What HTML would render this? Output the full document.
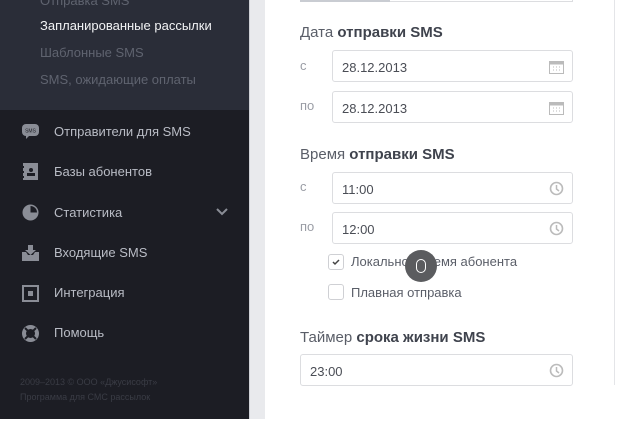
<!DOCTYPE html>
<html><head><meta charset="utf-8"><style>
*{margin:0;padding:0;box-sizing:border-box}
body{width:640px;height:430px;background:#fff;position:relative;overflow:hidden;font-family:"Liberation Sans","DejaVu Sans",sans-serif}
.sb{position:absolute;left:0;top:0;width:249px;height:419px;background:#1c1d24}
.sub{position:absolute;left:0;top:0;width:249px;height:110px;background:#2a2d38}
.sub div{position:absolute;left:40px;font-size:13px;color:#5f636f}
.nav{position:absolute;left:54px;font-size:13px;color:#b9bcc5}
.ic{position:absolute;left:22px;width:17px;height:17px}
.foot{position:absolute;left:20px;font-size:9px;color:#3a3c45}
.strip{position:absolute;left:249px;top:0;width:16px;height:419px;background:#e9eaed;border-left:1px solid #cfd1d6}
.rl{position:absolute;left:614px;top:0;width:1px;height:385px;background:#e4e5e8}
.h{position:absolute;left:300px;font-size:15px;color:#5a5e68}
.h b{color:#3f434d}
.lb{position:absolute;left:300px;font-size:13px;color:#9a9da5}
.in{position:absolute;left:332px;width:241px;height:32px;border:1px solid #dcdde0;border-radius:3px;font-size:13px;color:#4a4d55;padding:9px 0 0 9px}
.cb{position:absolute;left:328px;width:16px;height:16px;border:1px solid #cfd0d4;border-radius:3px;background:#fff}
.ct{position:absolute;left:351px;font-size:13px;color:#5a5e68}
svg.r{position:absolute;right:8px;top:8px}
</style></head><body>
<div class="sb">
<div class="sub">
<div style="top:-7px">Отправка SMS</div>
<div style="top:18px;color:#f2f3f5">Запланированные рассылки</div>
<div style="top:45px">Шаблонные SMS</div>
<div style="top:72px">SMS, ожидающие оплаты</div>
</div>
<svg class="ic" style="top:123px" viewBox="0 0 17 17"><rect x="0" y="1" width="17" height="12" rx="4" fill="#8a8d96"/><path d="M4 12l0 4 4-4z" fill="#8a8d96"/><text x="8.5" y="9.5" font-size="5" fill="#1c1d24" text-anchor="middle" font-family="Liberation Sans">SMS</text></svg>
<div class="nav" style="top:124px">Отправители для SMS</div>
<svg class="ic" style="top:163px" viewBox="0 0 17 17"><rect x="1" y="0" width="15" height="17" fill="#8a8d96"/><rect x="0" y="3" width="2" height="2" fill="#1c1d24"/><rect x="0" y="8" width="2" height="2" fill="#1c1d24"/><rect x="0" y="13" width="2" height="2" fill="#1c1d24"/><circle cx="9" cy="7" r="2" fill="#1c1d24"/><rect x="5" y="10" width="8" height="3" fill="#1c1d24"/></svg>
<div class="nav" style="top:164px">Базы абонентов</div>
<svg class="ic" style="top:204px" viewBox="0 0 17 17"><circle cx="8.5" cy="8.5" r="8" fill="#8a8d96"/><path d="M8.5 8.5V2A6.5 6.5 0 0 1 15 8.5z" fill="#1c1d24"/></svg>
<div class="nav" style="top:205px">Статистика</div>
<svg style="position:absolute;left:216px;top:208px" width="12" height="8"><path d="M1 1l5 5 5-5" stroke="#8a8d96" stroke-width="2" fill="none"/></svg>
<svg class="ic" style="top:244px" viewBox="0 0 17 17"><path d="M0 8h4l2 3h5l2-3h4v9H0z" fill="#8a8d96"/><path d="M6 1h5v5h3l-5.5 5L3 6h3z" fill="#8a8d96"/></svg>
<div class="nav" style="top:245px">Входящие SMS</div>
<svg class="ic" style="top:285px" viewBox="0 0 17 17"><rect x="1" y="1" width="15" height="15" stroke="#8a8d96" stroke-width="2" fill="none"/><rect x="6" y="6" width="5" height="5" fill="#8a8d96"/></svg>
<div class="nav" style="top:285px">Интеграция</div>
<svg class="ic" style="top:325px" viewBox="0 0 17 17"><circle cx="8.5" cy="8.5" r="6.5" stroke="#8a8d96" stroke-width="4" fill="none"/><path d="M3 3l3 3M14 3l-3 3M3 14l3-3M14 14l-3-3" stroke="#1c1d24" stroke-width="2"/></svg>
<div class="nav" style="top:325px">Помощь</div>
<div class="foot" style="top:377px">2009–2013 © ООО «Джусисофт»</div>
<div class="foot" style="top:392px">Программа для СМС рассылок</div>
</div>
<div class="strip"></div>
<div class="rl"></div>
<div style="position:absolute;left:300px;top:0;width:273px;height:2px;border:1px solid #dcdde0;border-top:0"></div>
<div style="position:absolute;left:300px;top:0;width:90px;height:2px;background:#c9ccd2"></div>
<div class="h" style="top:24px">Дата <b>отправки SMS</b></div>
<div class="lb" style="top:58px">с</div>
<div class="in" style="top:50px">28.12.2013<svg class="r" width="15" height="15"><rect x="0.5" y="2.5" width="14" height="12" fill="none" stroke="#bbb"/><rect x="0.5" y="2.5" width="14" height="3" fill="#bbb"/><path d="M4 8h1M7 8h1M10 8h1M4 11h1M7 11h1M10 11h1" stroke="#bbb"/></svg></div>
<div class="lb" style="top:98px">по</div>
<div class="in" style="top:91px">28.12.2013<svg class="r" width="15" height="15"><rect x="0.5" y="2.5" width="14" height="12" fill="none" stroke="#bbb"/><rect x="0.5" y="2.5" width="14" height="3" fill="#bbb"/><path d="M4 8h1M7 8h1M10 8h1M4 11h1M7 11h1M10 11h1" stroke="#bbb"/></svg></div>
<div class="h" style="top:146px">Время <b>отправки SMS</b></div>
<div class="lb" style="top:179px">с</div>
<div class="in" style="top:172px">11:00<svg class="r" width="15" height="15"><circle cx="7.5" cy="7.5" r="6" fill="none" stroke="#bbb" stroke-width="1.6"/><path d="M7.5 4v4l2.5 2" stroke="#bbb" stroke-width="1.5" fill="none"/></svg></div>
<div class="lb" style="top:219px">по</div>
<div class="in" style="top:212px">12:00<svg class="r" width="15" height="15"><circle cx="7.5" cy="7.5" r="6" fill="none" stroke="#bbb" stroke-width="1.6"/><path d="M7.5 4v4l2.5 2" stroke="#bbb" stroke-width="1.5" fill="none"/></svg></div>
<div class="cb" style="top:254px"><svg width="14" height="14" style="position:absolute;left:0;top:0"><path d="M4 7l2 2 4-4" stroke="#444" stroke-width="1.5" fill="none"/></svg></div>
<div class="ct" style="top:254px">Локальное время абонента</div>
<div class="cb" style="top:284px"></div>
<div class="ct" style="top:285px">Плавная отправка</div>
<div style="position:absolute;left:405px;top:250px;width:32px;height:32px;border-radius:50%;background:#5b5c5f"><div style="position:absolute;left:11px;top:9px;width:10px;height:14px;border:1.5px solid #fff;border-radius:5px"></div></div>
<div class="h" style="top:329px">Таймер <b>срока жизни SMS</b></div>
<div class="in" style="top:354px;left:300px;width:273px">23:00<svg class="r" width="15" height="15"><circle cx="7.5" cy="7.5" r="6" fill="none" stroke="#bbb" stroke-width="1.6"/><path d="M7.5 4v4l2.5 2" stroke="#bbb" stroke-width="1.5" fill="none"/></svg></div>
</body></html>
